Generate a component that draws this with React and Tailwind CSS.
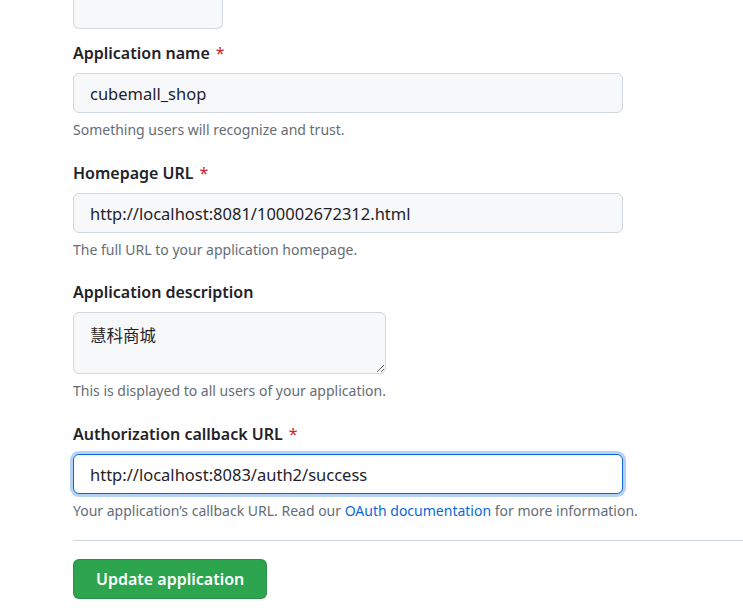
const font = { fontFamily: '"Noto Sans", "Noto Sans CJK SC", sans-serif' }

function Field({ label, required, children, note, className = 'mb-[21px]' }) {
  return (
    <div className={className}>
      <label className="block text-[16px] leading-6 font-semibold text-[#1f2328] mb-2">
        {label}
        {required && <span className="text-[#cf222e] font-normal ml-[6px]">*</span>}
      </label>
      {children}
      <p className="mt-[7px] text-[14px] leading-5 text-[#656d76]">{note}</p>
    </div>
  )
}

export default function App() {
  return (
    <div className="bg-white min-h-screen overflow-hidden pl-[73px] text-[#1f2328]" style={font}>
      <div className="w-[150px] h-[30px] -mt-px bg-[#f6f8fa] border border-[#d0d7de] border-t-0 rounded-b-md mb-3" />

      <Field label="Application name" required note="Something users will recognize and trust.">
        <input
          readOnly
          value="cubemall_shop"
          className="block w-[550px] h-10 px-4 rounded-md bg-[#f6f8fa] border border-[#d0d7de] text-[16.5px] text-[#1f2328] outline-none"
          style={font}
        />
      </Field>

      <Field label="Homepage URL" required note="The full URL to your application homepage." className="mb-5">
        <input
          readOnly
          value="http://localhost:8081/100002672312.html"
          className="block w-[550px] h-10 px-4 rounded-md bg-[#f6f8fa] border border-[#d0d7de] text-[16.5px] text-[#1f2328] outline-none"
          style={font}
        />
      </Field>

      <Field label="Application description" note="This is displayed to all users of your application.">
        <textarea
          readOnly
          value="慧科商城"
          className="block w-[313px] h-[62px] px-4 pt-[11px] pb-[7px] rounded-md bg-[#f6f8fa] border border-[#d0d7de] text-[16.5px] leading-6 text-[#1f2328] outline-none"
          style={font}
        />
      </Field>

      <Field
        label="Authorization callback URL"
        required
        className="mb-[19px]"
        note={
          <>
            Your application’s callback URL. Read our{' '}
            <span className="text-[#0969da]">OAuth documentation</span> for more information.
          </>
        }
      >
        <input
          readOnly
          value="http://localhost:8083/auth2/success"
          className="block w-[550px] h-10 px-4 rounded-md bg-white border border-[#0969da] text-[16.5px] text-[#1f2328] outline-none shadow-[0_0_0_3px_rgba(9,105,218,0.3)]"
          style={font}
        />
      </Field>

      <hr className="border-0 border-t border-[#d0d7de] mt-0 mb-[18px]" />

      <button
        className="h-10 px-[22px] rounded-md bg-[#2da44e] border border-[rgba(27,31,36,0.15)] text-white text-[16px] font-semibold"
        style={font}
      >
        Update application
      </button>
    </div>
  )
}
